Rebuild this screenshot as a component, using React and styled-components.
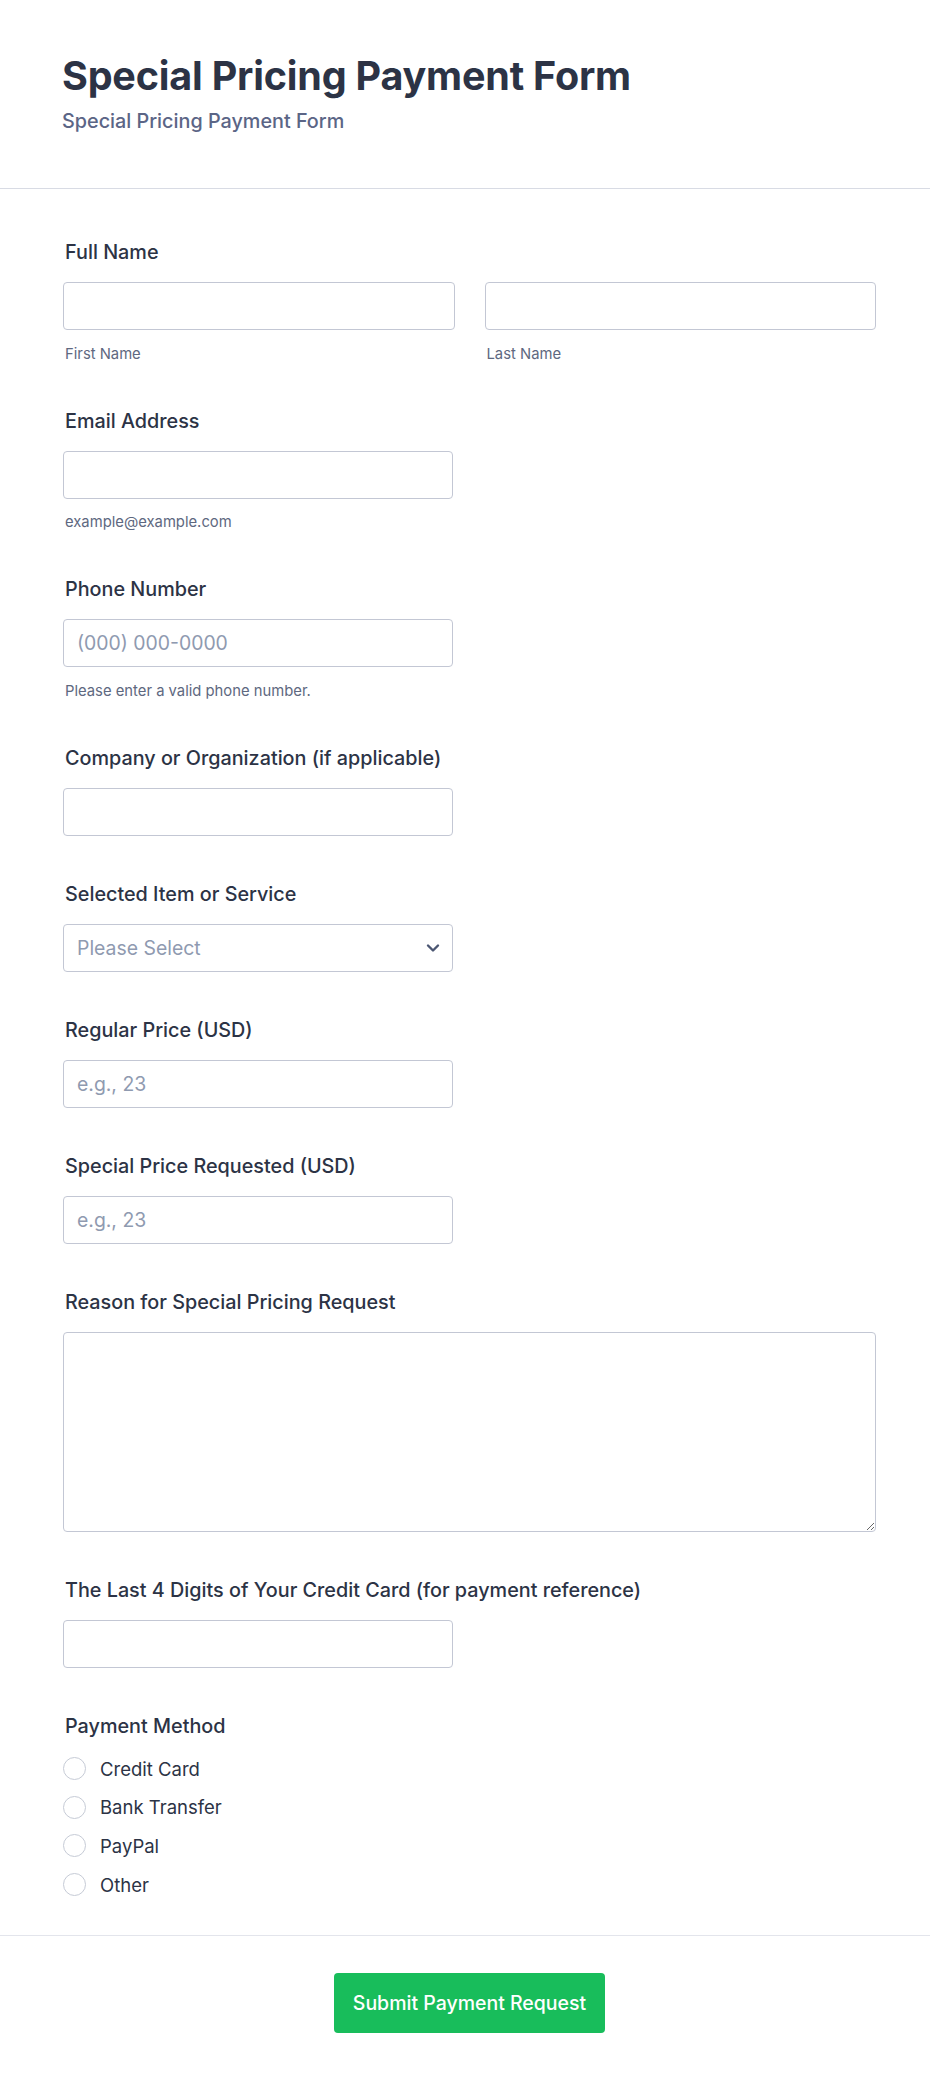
import React from "react";
import styled, { createGlobalStyle } from "styled-components";

const Global = createGlobalStyle`
  html, body { margin: 0; padding: 0; background: #fff; }
  body { font-family: Inter, "Noto Sans", Arial, sans-serif; color: #2c3345; }
  * { box-sizing: border-box; }
`;

const Page = styled.div`
  width: 930px;
  background: #fff;
`;

const Header = styled.header`
  padding: 52px 54px 55px 62px;
  border-bottom: 1px solid #d8dbe4;
`;

const Title = styled.h1`
  margin: 0;
  font-size: 39.5px;
  line-height: 48px;
  font-weight: 700;
  color: #2c3345;
  letter-spacing: -0.2px;
`;

const Subtitle = styled.p`
  margin: 9px 0 0;
  font-size: 19.8px;
  line-height: 24px;
  font-weight: 500;
  color: #5b6586;
`;

const Form = styled.form`
  padding: 51px 54px 31px 63px;
  border-bottom: 1px solid #e3e5ec;
`;

const Field = styled.div`
  margin-bottom: 46px;
  &:last-child { margin-bottom: 0; }
`;

const Label = styled.div`
  font-size: 19.8px;
  line-height: 24px;
  font-weight: 500;
  color: #2c3345;
  padding-left: 2px;
  margin-bottom: 18px;
`;

const Row = styled.div`
  display: grid;
  grid-template-columns: 1fr 1fr;
  column-gap: 30px;
`;

const Col = styled.div`
  display: flex;
  flex-direction: column;
`;

const Input = styled.input`
  display: block;
  width: ${(p) => (p.$full ? "100%" : "390px")};
  height: 48px;
  border: 1px solid #c3c7d4;
  border-radius: 4px;
  padding: 0 13px;
  font-family: inherit;
  font-size: 19.4px;
  color: #2c3345;
  background: #fff;
  outline: none;
  &::placeholder { color: #8f9ab0; }
`;

const SelectBox = styled.div`
  width: 390px;
  height: 48px;
  border: 1px solid #c3c7d4;
  border-radius: 4px;
  padding: 0 13px;
  display: flex;
  align-items: center;
  justify-content: space-between;
  font-size: 19.4px;
  color: #8f9ab0;
`;

const Chevron = styled.svg`
  width: 14px;
  height: 10px;
  margin-right: -1px;
`;

const TextArea = styled.textarea`
  display: block;
  width: 100%;
  height: 200px;
  border: 1px solid #c3c7d4;
  border-radius: 4px;
  padding: 10px 13px;
  font-family: inherit;
  font-size: 19px;
  resize: vertical;
  outline: none;
`;

const SubLabel = styled.div`
  margin-top: 14.5px;
  font-size: 14.8px;
  line-height: 18px;
  color: #5e6880;
  padding-left: 2px;
`;

const RadioList = styled.div`
  display: flex;
  flex-direction: column;
  margin-top: -6px;
`;

const RadioRow = styled.label`
  display: flex;
  align-items: center;
  height: 38.6px;
  gap: 14px;
  font-size: 18.5px;
  color: #2c3345;
`;

const RadioCircle = styled.span`
  width: 23px;
  height: 23px;
  border-radius: 50%;
  border: 1.5px solid #c6cbd6;
  background: #fff;
  flex: none;
`;

const Footer = styled.div`
  display: flex;
  justify-content: center;
  padding: 37px 54px 50px 63px;
`;

const Button = styled.button`
  height: 60px;
  padding: 0 18.5px;
  background: #18bd5b;
  color: #fff;
  border: none;
  border-radius: 4px;
  font-family: inherit;
  font-size: 19.5px;
  font-weight: 500;
  cursor: pointer;
`;

const fieldsSimple = (label, placeholder, sub) => (
  <Field>
    <Label>{label}</Label>
    <Input placeholder={placeholder} />
    {sub && <SubLabel>{sub}</SubLabel>}
  </Field>
);

export default function App() {
  return (
    <Page>
      <Global />
      <Header>
        <Title>Special Pricing Payment Form</Title>
        <Subtitle>Special Pricing Payment Form</Subtitle>
      </Header>
      <Form onSubmit={(e) => e.preventDefault()}>
        <Field>
          <Label>Full Name</Label>
          <Row>
            <Col>
              <Input $full />
              <SubLabel>First Name</SubLabel>
            </Col>
            <Col>
              <Input $full />
              <SubLabel>Last Name</SubLabel>
            </Col>
          </Row>
        </Field>
        {fieldsSimple("Email Address", "", "example@example.com")}
        {fieldsSimple("Phone Number", "(000) 000-0000", "Please enter a valid phone number.")}
        {fieldsSimple("Company or Organization (if applicable)", "")}
        <Field>
          <Label>Selected Item or Service</Label>
          <SelectBox>
            <span>Please Select</span>
            <Chevron viewBox="0 0 14 10">
              <path d="M2 2.5 L7 7.5 L12 2.5" fill="none" stroke="#4b5672" strokeWidth="2.4" strokeLinecap="round" strokeLinejoin="round" />
            </Chevron>
          </SelectBox>
        </Field>
        {fieldsSimple("Regular Price (USD)", "e.g., 23")}
        {fieldsSimple("Special Price Requested (USD)", "e.g., 23")}
        <Field>
          <Label>Reason for Special Pricing Request</Label>
          <TextArea />
        </Field>
        {fieldsSimple("The Last 4 Digits of Your Credit Card (for payment reference)", "")}
        <Field>
          <Label>Payment Method</Label>
          <RadioList>
            {["Credit Card", "Bank Transfer", "PayPal", "Other"].map((o) => (
              <RadioRow key={o}>
                <RadioCircle />
                <span>{o}</span>
              </RadioRow>
            ))}
          </RadioList>
        </Field>
      </Form>
      <Footer>
        <Button type="submit">Submit Payment Request</Button>
      </Footer>
    </Page>
  );
}
